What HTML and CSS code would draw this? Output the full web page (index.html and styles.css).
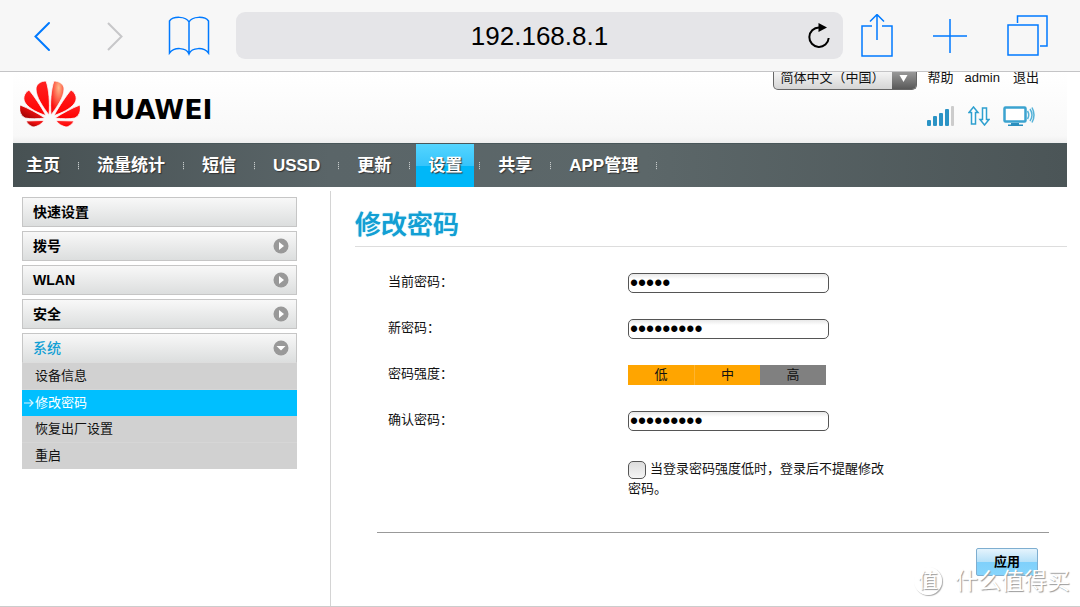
FILE: index.html
```html
<!DOCTYPE html>
<html lang="zh-CN">
<head>
<meta charset="utf-8">
<meta name="viewport" content="width=device-width, initial-scale=1">
<title>修改密码</title>
<link rel="stylesheet" href="styles.css">
</head>
<body>
<div class="toolbar">
  <div class="toolbar-nav">
    <button class="tool" type="button" aria-label="后退"><svg width="20" height="32" viewBox="0 0 20 32"><path d="M17 3 3.500 16.500 17 30" class="stroke-blue thick"/></svg></button>
    <button class="tool" type="button" aria-label="前进" disabled><svg width="20" height="32" viewBox="0 0 20 32"><path d="M3 3 16.500 16.500 3 30" class="stroke-grey"/></svg></button>
    <button class="tool" type="button" aria-label="书签"><svg width="42" height="40" viewBox="0 0 42 40"><path d="M21 38V6C18 0 5 0 1.500 5V37C6 31 18 31 21 38C24 31 36 31 40.500 37V5C37 0 24 0 21 6" class="stroke-blue book"/></svg></button>
  </div>
  <div class="address">
    <span class="address-text">192.168.8.1</span>
    <button class="tool reload" type="button" aria-label="重新载入"><svg width="24" height="26" viewBox="0 0 24 26"><path d="M12 4.500A9.700 9.700 0 1 0 21.700 15" fill="none" stroke="#000" stroke-width="2"/><path d="M11.500 0 20 4.500 11.500 9z"/></svg></button>
  </div>
  <div class="toolbar-actions">
    <button class="tool" type="button" aria-label="分享"><svg width="32" height="44" viewBox="0 0 32 44"><path d="M11 12H1V42H31V12H21M16 26V1M9 7.500 16 .500 23 7.500" class="stroke-blue book"/></svg></button>
    <button class="tool" type="button" aria-label="新标签页"><svg width="34" height="34" viewBox="0 0 34 34"><path d="M17 0V34M0 17H34" class="stroke-blue book"/></svg></button>
    <button class="tool" type="button" aria-label="标签页"><svg width="42" height="42" viewBox="0 0 42 42"><path d="M2 10H32V40H2zM11.500 8V1H41V31H34" class="stroke-blue book"/></svg></button>
  </div>
</div>

<div class="page">
  <header class="header">
    <div class="brand">
      <svg width="60" height="47" viewBox="0 0 60 47" role="img" aria-label="HUAWEI">
        <defs>
          <linearGradient id="dark" x1="0" y1="1" x2="1" y2="0"><stop offset="0" stop-color="#8a0000"/><stop offset=".6" stop-color="#f01010"/></linearGradient>
          <radialGradient id="glow" cx=".4" cy=".2" r=".7"><stop offset="0" stop-color="#ffb98a"/><stop offset="1" stop-color="#fb0d0d"/></radialGradient>
          <linearGradient id="red" x1="0" y1="0" x2="0" y2="1"><stop offset="0" stop-color="#f22"/><stop offset="1" stop-color="#f00"/></linearGradient>
        </defs>
        <g stroke="#fdfdfd" stroke-width=".8">
        <path fill="url(#red)" d="M29 34C23 26 16 16 16 8C16 3 21 0 26 0C29 8 30 22 29 34z"/>
        <path fill="url(#red)" d="M26 34.500C20 24 14 15 9 9C4 12 2 18 6 23C10 28 18 32 26 34.500z"/>
        <path fill="url(#dark)" d="M25 37C17 32 8 27 0 24C-1 29 0 34 5 37C10 38 18 38 25 37z"/>
        <path fill="url(#dark)" d="M24 39.500 6 40C8 44 12 46 14 46C18 45 22 43 24 39.500z"/>
        <g transform="translate(60 0) scale(-1 1)">
          <path fill="url(#glow)" d="M29 34C23 26 16 16 16 8C16 3 21 0 26 0C29 8 30 22 29 34z"/>
          <path fill="url(#red)" d="M26 34.500C20 24 14 15 9 9C4 12 2 18 6 23C10 28 18 32 26 34.500z"/>
          <path fill="url(#red)" d="M25 37C17 32 8 27 0 24C-1 29 0 34 5 37C10 38 18 38 25 37z"/>
          <path fill="url(#red)" d="M24 39.500 6 40C8 44 12 46 14 46C18 45 22 43 24 39.500z"/>
        </g>
        </g>
      </svg>
      <span class="brand-name">HUAWEI</span>
    </div>
    <div class="header-side">
      <div class="links">
        <span class="language">
          <select aria-label="语言"><option>简体中文（中国）</option></select>
          <svg class="language-arrow" width="24" height="18" viewBox="0 6 24 18"><path d="M7.500 9H15.500L11.500 16z" fill="#fff"/></svg>
        </span>
        <a href="#">帮助</a>
        <a href="#">admin</a>
        <a href="#">退出</a>
      </div>
      <div class="status">
        <svg width="28" height="20" viewBox="0 0 28 20"><g fill="#2b93c5"><rect y="14" width="4" height="6" rx="1"/><rect x="6" y="10" width="4" height="10" rx="1"/><rect x="12" y="7" width="4" height="13" rx="1"/><rect x="18" y="3" width="4" height="17" rx="1"/></g><rect x="24" width="3" height="20" rx="1" fill="#ccc"/></svg>
        <svg width="22" height="20" viewBox="0 0 22 20"><path d="M5.500 1 10 6.500H7.500V18H3.500V6.500H1zM16.500 19 21 13.500H18.500V2H14.500V13.500H12z" fill="#fff" stroke="#2fa0cf" stroke-width="1.500"/></svg>
        <svg width="32" height="20" viewBox="0 0 32 20"><rect x="1.500" y="1.500" width="21" height="14" rx="1" fill="#fff" stroke="#3ba3d0" stroke-width="2.500"/><path d="M8 17H16V18.500H20V20H5V18.500H8z" fill="#2b8fbe"/><path d="M24.500 5Q27 9 24.500 13M27 3Q31 9 27 15M29 1.500Q33 9 29 16.500" fill="none" stroke="#55b2d8" stroke-width="1.500"/></svg>
      </div>
    </div>
  </header>

  <nav class="menu">
    <a href="#">主页</a>
    <a href="#">流量统计</a>
    <a href="#">短信</a>
    <a href="#">USSD</a>
    <a href="#">更新</a>
    <a href="#" class="active" aria-current="page"><span>设置</span></a>
    <a href="#">共享</a>
    <a href="#">APP管理</a>
  </nav>

  <div class="body">
    <aside class="sidebar">
      <button type="button" class="group">快速设置</button>
      <button type="button" class="group">拨号<svg width="16" height="16" viewBox="0 0 16 16"><circle cx="8" cy="8" r="7.500"/><path d="M6 4 11 8 6 12z"/></svg></button>
      <button type="button" class="group">WLAN<svg width="16" height="16" viewBox="0 0 16 16"><circle cx="8" cy="8" r="7.500"/><path d="M6 4 11 8 6 12z"/></svg></button>
      <button type="button" class="group">安全<svg width="16" height="16" viewBox="0 0 16 16"><circle cx="8" cy="8" r="7.500"/><path d="M6 4 11 8 6 12z"/></svg></button>
      <div>
        <button type="button" class="group open" aria-expanded="true">系统<svg width="16" height="16" viewBox="0 0 16 16"><circle cx="8" cy="8" r="7.500"/><path d="M3.500 6H12.500L8 10.500z"/></svg></button>
        <ul class="submenu">
          <li><a href="#">设备信息</a></li>
          <li><a href="#" class="current"><svg width="10" height="10" viewBox="0 0 10 10"><path d="M0 5H9M5.500 1.500 9 5 5.500 8.500" fill="none" stroke="#d5f4ff" stroke-width="1.200"/></svg>修改密码</a></li>
          <li><a href="#">恢复出厂设置</a></li>
          <li><a href="#">重启</a></li>
        </ul>
      </div>
    </aside>

    <main class="main">
      <h1>修改密码</h1>
      <form class="form">
        <div class="row"><label for="current">当前密码：</label><input id="current" type="password" value="admin"></div>
        <div class="row"><label for="new">新密码：</label><input id="new" type="password" value="password1"></div>
        <div class="row"><span class="label">密码强度：</span>
          <div class="strength"><span class="on">低</span><span class="on">中</span><span>高</span></div></div>
        <div class="row"><label for="confirm">确认密码：</label><input id="confirm" type="password" value="password1"></div>
        <div class="reminder"><input id="remind" type="checkbox"><label for="remind">当登录密码强度低时，登录后不提醒修改密码。</label></div>
        <div class="actions"><button type="submit" class="apply">应用</button></div>
      </form>
    </main>
  </div>
</div>

<div class="watermark"><span class="watermark-badge">值</span><span>什么值得买</span></div>
</body>
</html>
```
FILE: styles.css
```css
* { box-sizing: border-box; }

body {
  margin: 0;
  min-height: 100vh;
  display: flex;
  flex-direction: column;
  position: relative;
  background: #fff;
  color: #111;
  font: 13px/20px "Liberation Sans", "Noto Sans CJK SC", sans-serif;
}

a { color: inherit; text-decoration: none; }
button, input, select { font: inherit; color: inherit; margin: 0; }
svg { display: block; flex: none; }

/* Browser bar */
.toolbar {
  display: flex;
  align-items: center;
  height: 72px;
  padding: 0 32px;
  background: #f7f7f7;
  border-bottom: 1px solid #c4c4c6;
}
.tool { padding: 0; border: 0; background: none; }
.stroke-blue { fill: none; stroke: #007aff; stroke-width: 2; }
.thick { stroke-linecap: round; }
.book { stroke-width: 1.5; }
.stroke-grey { fill: none; stroke: #c7c7c9; stroke-width: 2; }
.toolbar-nav {
  display: flex;
  align-items: center;
  justify-content: space-between;
  width: 178px;
  margin-right: 26px;
}
.toolbar-nav .tool:nth-child(2) { margin-left: 10px; }
.address {
  flex: 1;
  display: flex;
  align-items: center;
  height: 47px;
  padding-right: 12px;
  border-radius: 9px;
  background: #e5e5e8;
  font-size: 26px;
}
.address-text { flex: 1; padding-left: 36px; text-align: center; color: #000; }
.toolbar-actions {
  display: flex;
  align-items: center;
  justify-content: space-between;
  width: 187px;
  margin-left: 18px;
}

/* Site header */
.page { flex: 1; display: flex; flex-direction: column; padding: 0 13px; border-bottom: 1px solid #ccc; }
.header {
  display: flex;
  justify-content: space-between;
  height: 71px;
  padding: 0 28px 0 7px;
  background: linear-gradient(#fff, #f8f8f8 90%, #eee);
}
.brand { display: flex; align-items: center; gap: 11px; padding-bottom: 7px; }
.brand-name { padding-top: 12px; font: bold 27px/28px "DejaVu Sans", sans-serif; color: #000; }
.header-side { display: flex; flex-direction: column; align-items: flex-end; gap: 16px; }
.links { display: flex; align-items: flex-start; gap: 11px; }
.links a { line-height: 12px; }
.links a:nth-of-type(2) { margin-right: 2px; }
.language {
  display: flex;
  height: 18px;
  overflow: hidden;
  border: 1px solid #666;
  border-top: 0;
  border-radius: 0 0 5px 5px;
  background: linear-gradient(#f4f4f4, #d5d5d5);
}
.language select { width: 118px; height: 18px; padding: 0 0 6px 7px; border: 0; background: none; appearance: none; line-height: 12px; }
.language-arrow { background: linear-gradient(#999, #555); }
.status { display: flex; align-items: center; gap: 13px; margin-right: 4px; }

/* Main menu */
.menu {
  display: flex;
  height: 44px;
  background: linear-gradient(90deg, #475153, #5a6568 30%, #5c6769 60%, #4b5557);
  border-top: 1px solid #49575a;
  color: #fff;
  font-size: 17px;
  font-weight: bold;
  line-height: 42px;
  text-shadow: 1px 1px 1px #333;
  padding-left: 13px;
}
.menu a { display: flex; align-items: center; }
.menu a::after {
  content: "";
  width: 1px;
  height: 8px;
  margin: 0 18px;
  background: repeating-linear-gradient(#c5caca 0 1px, #6c7678 1px 2px);
}
.menu a.active { margin-left: -12px; }
.menu a.active span { padding: 0 12px; background: linear-gradient(#55d5ff, #36c4fb 50%, #00b7f8 51%); line-height: 43px; }
.menu a.active::after { margin-left: 5px; }

/* Content */
.body { flex: 1; display: flex; }
.sidebar {
  display: flex;
  flex-direction: column;
  gap: 4px;
  width: 275px;
  margin: 10px 0 0 9px;
}
.group {
  display: flex;
  align-items: center;
  justify-content: space-between;
  width: 100%;
  height: 30px;
  padding: 0 7px 0 10px;
  border: 1px solid #c6c6c6;
  background: linear-gradient(#f8f8f8, #dcdede);
  color: #000;
  font-size: 14px;
  font-weight: bold;
}
.group circle { fill: #999; }
.group path { fill: #fff; }
.open { color: #129fd4; font-weight: 500; border-bottom-color: #ddd; }
.submenu { margin: 0; padding: 0; list-style: none; background: #d1d1d1; }
.submenu li + li { border-top: 1px solid #d6d6d6; }
.submenu li:nth-child(3) { border-top: 0; }
.submenu a { display: flex; align-items: center; height: 26px; padding-left: 13px; }
.submenu .current { padding-left: 2px; gap: 1px; background: #00bfff; color: #fff; }

.main {
  flex: 1;
  margin: 4px 0 0 33px;
  padding-left: 24px;
  border-left: 1px solid #d4d4d4;
}
h1 {
  margin: 0;
  padding: 14px 0 1px;
  border-bottom: 1px solid #ddd;
  color: #129fd4;
  font-size: 26px;
  font-weight: 500;
  line-height: 40px;
  text-shadow: 0 0 1px #129fd4;
}
.form { padding: 13px 18px 0 22px; }
.row { display: grid; grid-template-columns: 240px 201px; align-items: center; height: 46px; margin-left: 11px; }
.row label, .label { padding-bottom: 2px; }
.row input {
  height: 20px;
  padding: 0 1px;
  border: 1px solid #555;
  border-radius: 5px;
  background: linear-gradient(#e8e8e8, #fff 5px);
  color: #000;
  font-size: 23px;
  line-height: 18px;
}
.strength { display: grid; grid-template-columns: repeat(3, 66px); text-align: center; }
.strength span { background: gray; }
.strength .on { background: orange; }
.strength .on + .on { border-left: 1px solid #ffb42e; }
.reminder { width: 264px; margin: 15px 0 0 251px; }
.reminder input {
  float: left;
  appearance: none;
  width: 18px;
  height: 18px;
  margin: 2px 4px 0 0;
  border: 1px solid #555;
  border-radius: 5px;
  background: linear-gradient(#ddd, #f5f5f5);
}
.actions { display: flex; justify-content: flex-end; margin-top: 33px; padding: 15px 11px 0; border-top: 1px solid #999; }
.apply {
  width: 62px;
  height: 28px;
  padding: 0;
  border: 1px solid #7eaed0;
  border-radius: 2px;
  background: linear-gradient(#e5f4fd, #b5e0f8 50%, #7fd0fb 51%, #86d5fc);
  color: #000;
  font-weight: bold;
}

.watermark {
  position: absolute;
  right: 10px;
  bottom: 11px;
  display: flex;
  align-items: center;
  gap: 13px;
  color: #fff;
  font-size: 23px;
  line-height: 30px;
  text-shadow: 1px 1px 1px #999;
  pointer-events: none;
}
.watermark-badge {
  width: 28px;
  height: 28px;
  border: 1px solid #fff;
  border-radius: 50%;
  box-shadow: 1px 1px 1px #aaa;
  font-size: 20px;
  line-height: 26px;
  text-align: center;
}
```
